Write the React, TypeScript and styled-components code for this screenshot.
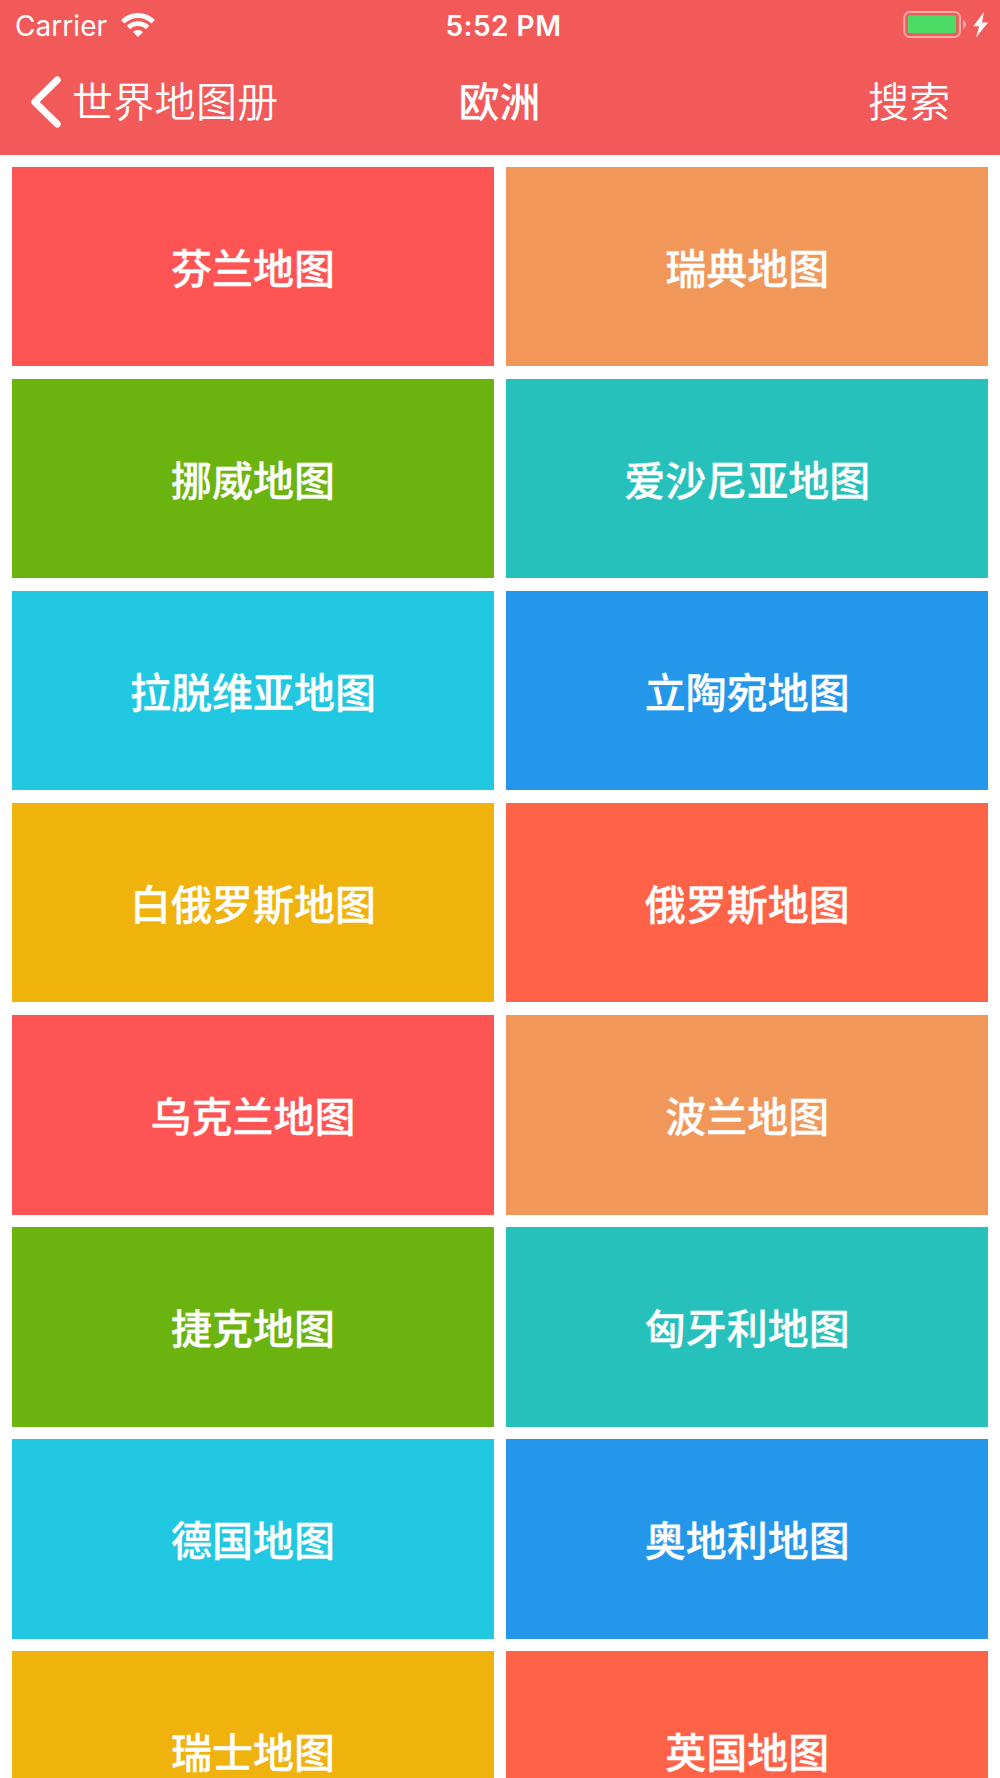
import React from "react";
import styled, { createGlobalStyle } from "styled-components";

const Global = createGlobalStyle`
  *, *::before, *::after { box-sizing: border-box; }
  body { margin: 0; background: #fff; overflow: hidden; }
`;

const Screen = styled.div`
  width: 1000px;
  height: 1778px;
  overflow: hidden;
  background: #fff;
  color: #fff;
  font-family: "Inter", "Noto Sans CJK SC", sans-serif;
`;

const Header = styled.header`
  height: 154.6px;
  background: #f25959;
`;

const StatusBar = styled.div`
  display: grid;
  grid-template-columns: 1fr auto 1fr;
  align-items: center;
  height: 50px;
  padding: 0 11px 0 15px;
`;

const StatusSide = styled.div<{ $end?: boolean }>`
  display: flex;
  align-items: center;
  justify-content: ${(p) => (p.$end ? "flex-end" : "flex-start")};
`;

const Carrier = styled.span`
  font-size: 28px;
  line-height: 48px;
  padding-top: 2px;
  letter-spacing: 0.05px;
  margin-right: 14px;
`;

const Clock = styled.span`
  font-size: 28px;
  font-weight: 600;
  line-height: 48px;
  padding-top: 2px;
  letter-spacing: 0.5px;
  margin-left: 3px;
`;

const NavBar = styled.nav`
  display: grid;
  grid-template-columns: 1fr auto 1fr;
  align-items: center;
  height: 104px;
  padding: 0 31px 0 30px;
`;

const BackButton = styled.button`
  display: flex;
  align-items: center;
  gap: 10px;
  padding: 0;
  border: 0;
  background: none;
  color: inherit;
`;

const NavLabel = styled.span`
  padding-bottom: 6px;
  font: 350 41px/60px "Noto Sans CJK SC", sans-serif;
  letter-spacing: 0.3px;
`;

const NavTitle = styled.h1`
  margin: 0;
  padding-bottom: 6px;
  font: 500 41px/60px "Noto Sans CJK SC", sans-serif;
`;

const SearchButton = styled.button`
  display: flex;
  justify-self: end;
  padding: 0 18.5px 0 0;
  border: 0;
  background: none;
  color: inherit;
`;

const Grid = styled.main`
  display: grid;
  grid-template-columns: 1fr 1fr;
  grid-auto-rows: 199.75px;
  gap: 12.3px 12.4px;
  padding: 12px;
`;

const Tile = styled.div<{ $color: string }>`
  display: flex;
  align-items: center;
  justify-content: center;
  padding: 0 0 1.8px 0.3px;
  background: ${(p) => p.$color};
  font: 500 41px/60px "Noto Sans CJK SC", sans-serif;
  -webkit-text-stroke: 0.3px #fff;
`;

const palette = ["#ff5454", "#f09759", "#6bb30f", "#27c1bc", "#21c8e2", "#2597ea", "#f0b20c", "#ff6347"];

const maps = [
  "芬兰地图", "瑞典地图", "挪威地图", "爱沙尼亚地图",
  "拉脱维亚地图", "立陶宛地图", "白俄罗斯地图", "俄罗斯地图",
  "乌克兰地图", "波兰地图", "捷克地图", "匈牙利地图",
  "德国地图", "奥地利地图", "瑞士地图", "英国地图",
];

const WifiIcon = () => (
  <svg width="34" height="26" viewBox="0 0 34 26" fill="none" stroke="#fff" strokeWidth="4.8">
    <path d="M1.8 9.8A21.5 21.5 0 0 1 32.2 9.8" />
    <path d="M7.5 15.5A13.5 13.5 0 0 1 26.5 15.5" />
    <path d="M12 20A7 7 0 0 1 22 20L17 25Z" fill="#fff" stroke="none" />
  </svg>
);

const BatteryIcon = () => (
  <svg width="86" height="30" viewBox="0 0 86 30">
    <rect x="1.3" y="2" width="55.7" height="25" rx="5.5" fill="none" stroke="#f9a9a9" strokeWidth="2" />
    <rect x="4.8" y="5.3" width="48.4" height="18" rx="2.5" fill="#4cdc66" />
    <path d="M60 9.5Q63 11.5 63 14.5Q63 17.5 60 19.5Z" fill="#f9a9a9" />
    <path d="M81 2L70.3 16.3H76.2L73 27.5L85 12.5H79Z" fill="#fff" />
  </svg>
);

const BackIcon = () => (
  <svg width="32" height="52" viewBox="0 0 32 52" fill="none">
    <path d="M27.2 4L4.8 26L27.2 48" stroke="#fff" strokeWidth="7" strokeLinecap="round" strokeLinejoin="round" />
  </svg>
);

export default function App() {
  return (
    <Screen>
      <Global />
      <Header>
        <StatusBar>
          <StatusSide>
            <Carrier>Carrier</Carrier>
            <WifiIcon />
          </StatusSide>
          <Clock>5:52 PM</Clock>
          <StatusSide $end>
            <BatteryIcon />
          </StatusSide>
        </StatusBar>
        <NavBar>
          <BackButton>
            <BackIcon />
            <NavLabel>世界地图册</NavLabel>
          </BackButton>
          <NavTitle>欧洲</NavTitle>
          <SearchButton>
            <NavLabel>搜索</NavLabel>
          </SearchButton>
        </NavBar>
      </Header>
      <Grid>
        {maps.map((name, i) => (
          <Tile key={name} $color={palette[i % palette.length]}>{name}</Tile>
        ))}
      </Grid>
    </Screen>
  );
}
